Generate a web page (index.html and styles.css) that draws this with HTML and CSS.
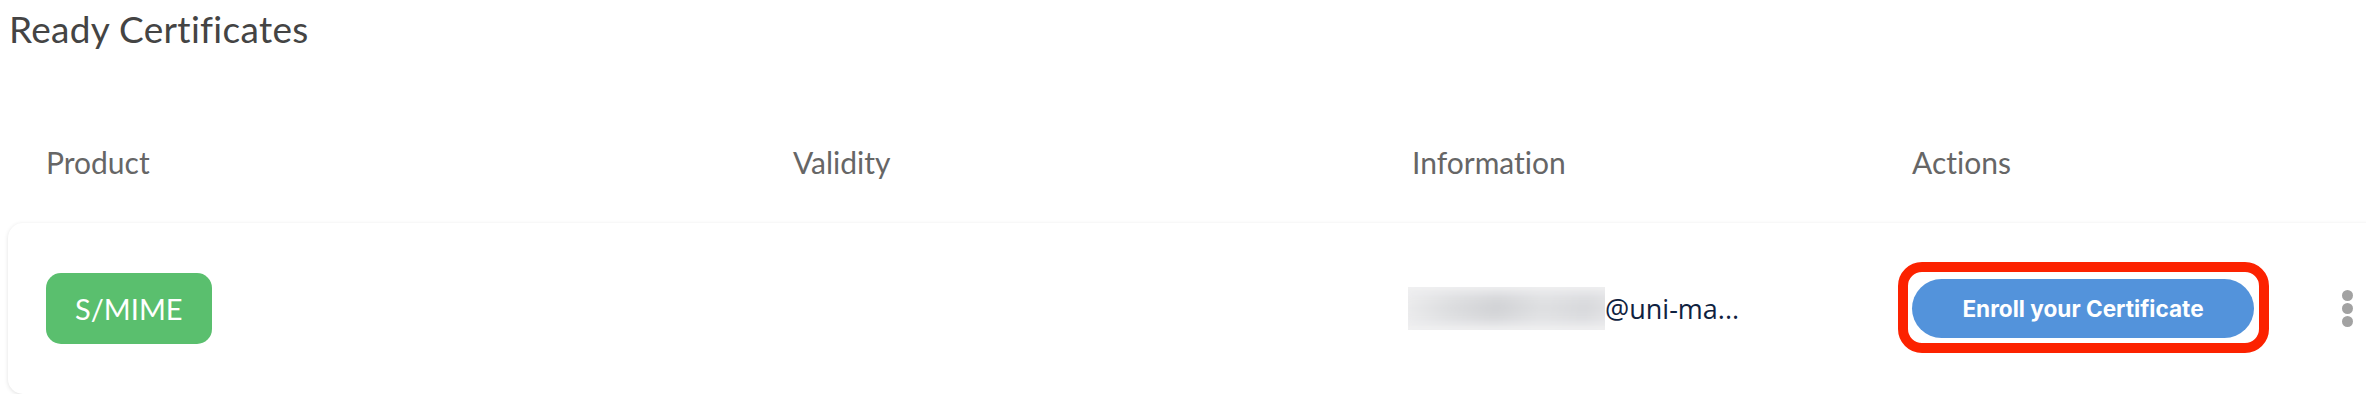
FILE: index.html
```html
<!DOCTYPE html>
<html lang="en">
<head>
    <meta charset="UTF-8">
    <meta name="viewport" content="width=device-width, initial-scale=1.0">
    <title>Ready Certificates</title>
    <link rel="stylesheet" href="styles.css">
</head>
<body>
    <h1>Ready Certificates</h1>

    <div class="table">
        <div class="table-head">
            <div>Product</div>
            <div>Validity</div>
            <div>Information</div>
            <div>Actions</div>
        </div>

        <div class="table-row">
            <div><span class="badge">S/MIME</span></div>
            <div></div>
            <div class="info">
                <!-- redacted part of the address -->
                <span class="redacted"><span class="smudge"></span></span>
                <span class="email">@uni-ma...</span>
            </div>
            <div class="actions">
                <span class="highlight">
                    <button class="enroll">Enroll your Certificate</button>
                </span>
                <span class="kebab"><i></i><i></i><i></i></span>
            </div>
        </div>
    </div>
</body>
</html>
```

FILE: styles.css
```css
html, body {
    overflow: hidden;
}
body {
    margin: 0;
    font-family: Lato, "Open Sans", sans-serif;
    font-variant-ligatures: none;
    background: white;
    color: #444;
}
h1 {
    margin: 7px 0 0 9px;
    font-size: 37px;
    line-height: 44px;
    font-weight: 400;
    letter-spacing: 0.3px;
    color: #444;
}
.table {
    margin: 93px 0 0 8px;
    width: 2400px;
}
.table-head,
.table-row {
    display: grid;
    grid-template-columns: 747px 619px 500px 1fr;
    padding-left: 38px;
}
.table-head {
    font-size: 30px;
    line-height: 36px;
    color: #666;
}
.table-row {
    margin-top: 43px;
    height: 171px;
    align-items: center;
    background: white;
    border-radius: 15px;
    box-shadow: 0 1px 4px rgba(0,0,0,0.12);
}
.badge {
    display: inline-flex;
    align-items: center;
    height: 71px;
    padding: 0 29px;
    border-radius: 15px;
    background: #5abf6e;
    color: white;
    font-size: 29px;
}
.info {
    display: flex;
    align-items: center;
    margin-left: -4px;
}
.redacted {
    position: relative;
    display: block;
    width: 197px;
    height: 43px;
    overflow: hidden;
    background: #f1f1f2;
}
.smudge {
    position: absolute;
    left: -10px;
    top: 6px;
    width: 220px;
    height: 30px;
    background: linear-gradient(100deg, #eeeeef 0%, #dcdddf 25%, #d2d3d6 45%, #dfe0e2 65%, #d8d9dc 85%, #e6e6e8 100%);
    filter: blur(6px);
}
.email {
    font-family: "Open Sans", sans-serif;
    font-size: 27px;
    color: #0f2240;
}
.actions {
    display: flex;
    align-items: center;
}
.highlight {
    position: relative;
    display: block;
}
.highlight::after {
    content: "";
    position: absolute;
    top: -17px;
    left: -14px;
    right: -15px;
    bottom: -15px;
    border: 10px solid #fc2200;
    border-radius: 24px;
}
.enroll {
    display: block;
    width: 342px;
    height: 59px;
    border: 0;
    border-radius: 30px;
    background: #5393db;
    color: white;
    font-family: Inter, sans-serif;
    font-weight: 700;
    font-size: 22.6px;
}
.kebab {
    display: flex;
    flex-direction: column;
    gap: 2px;
    margin-left: 88px;
}
.kebab i {
    width: 11px;
    height: 11px;
    border-radius: 50%;
    background: #a2a2a2;
}
```
